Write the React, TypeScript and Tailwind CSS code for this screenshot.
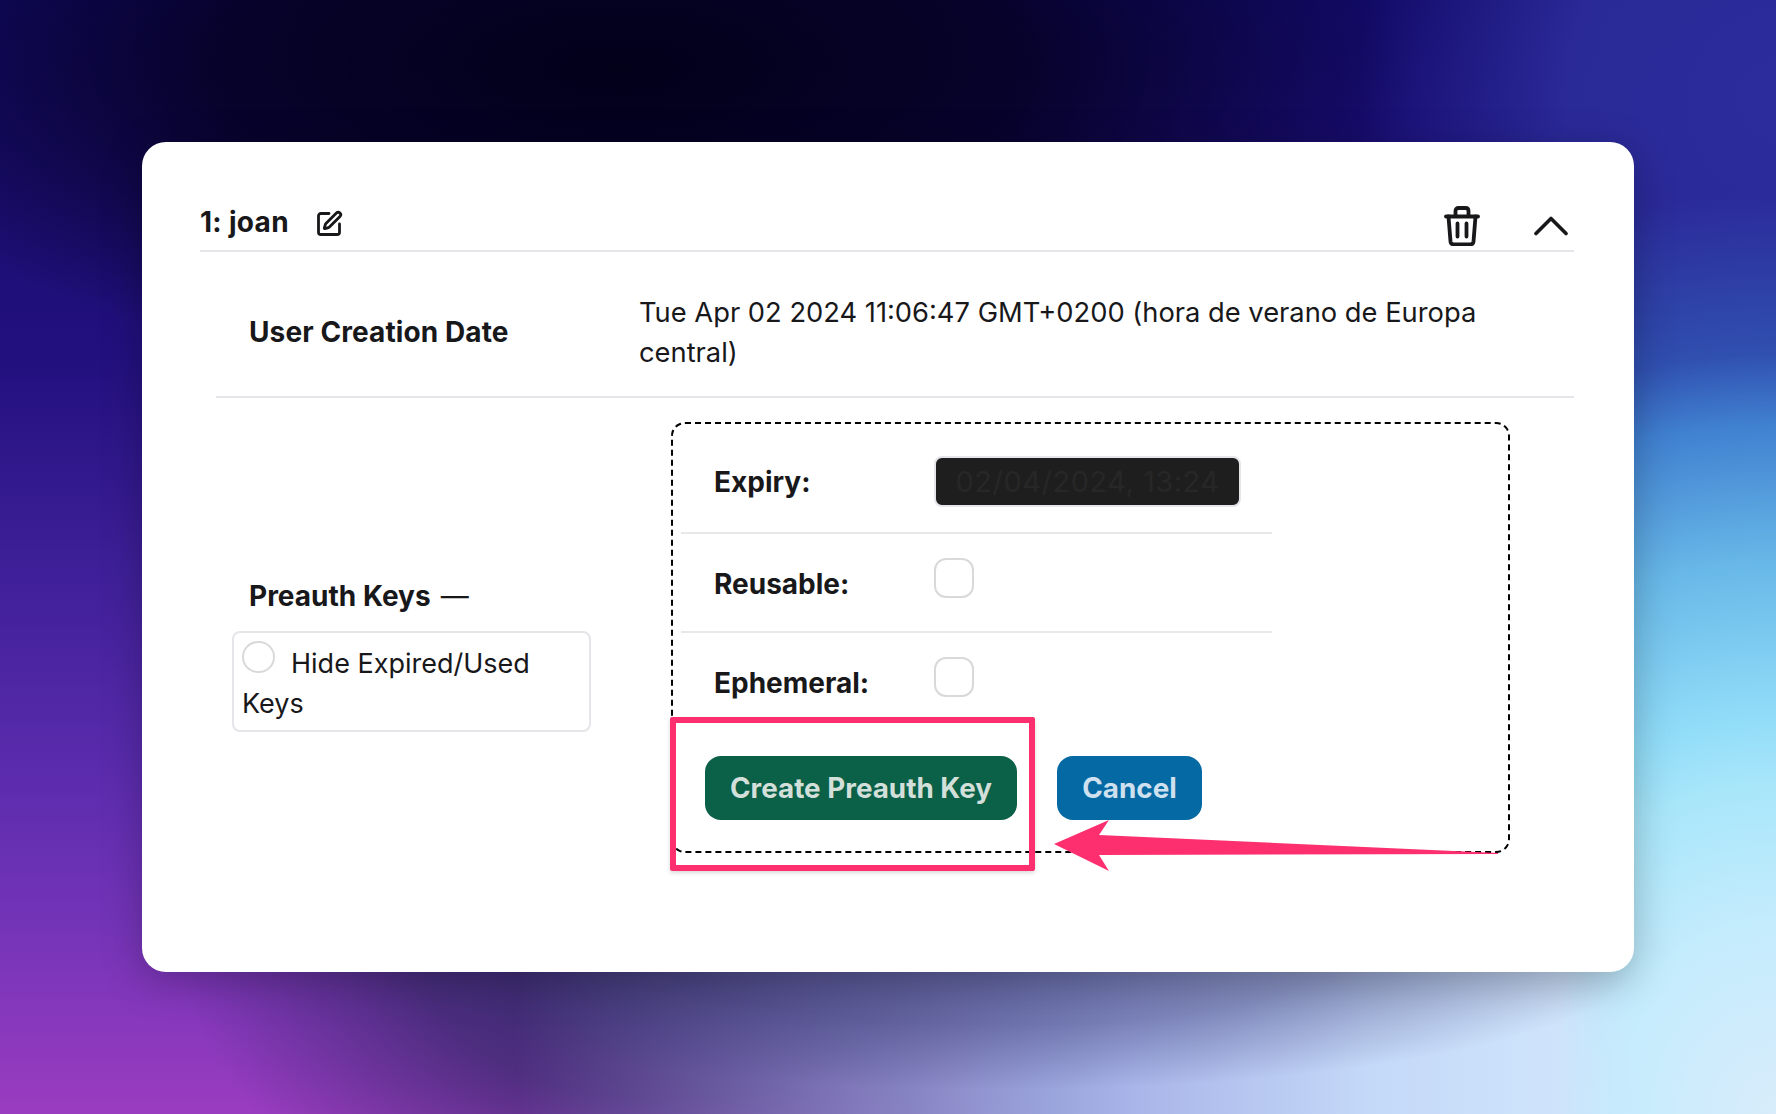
import { SquarePen } from "lucide-react";

function Trash() {
  return (
    <svg width="36" height="40" viewBox="0 0 36 40" fill="none" stroke="#18181b" strokeWidth="3.8" strokeLinecap="round" strokeLinejoin="round">
      <path d="M2 10.5H34" />
      <path d="M4.5 10.5L6.5 35.5C6.7 37.3 7.8 38.3 9.5 38.3H26.5C28.2 38.3 29.3 37.3 29.5 35.5L31.5 10.5" />
      <path d="M11.5 10V5C11.5 3 12.5 2 14.5 2H21.5C23.5 2 24.5 3 24.5 5V10" />
      <path d="M13.5 17.5V30.5M22.5 17.5V30.5" />
    </svg>
  );
}

function Chevron() {
  return (
    <svg width="34" height="20" viewBox="0 0 34 20" fill="none" stroke="#18181b" strokeWidth="3.6" strokeLinecap="round" strokeLinejoin="round">
      <path d="M2 17.5L17 2.5L32 17.5" />
    </svg>
  );
}

function Check() {
  return <div className="h-[40px] w-[40px] rounded-[12px] border-2 border-[#d9d9d9] bg-white" />;
}

export default function App() {
  return (
    <div className="flex h-[1114px] w-full items-start justify-center overflow-hidden [background:radial-gradient(ellipse_640px_130px_at_1000px_960px,rgba(50,50,110,0.55)_0%,rgba(50,50,110,0.4)_50%,rgba(50,50,110,0)_100%),linear-gradient(90deg,rgba(138,144,200,0)_0%,rgba(138,144,200,0)_25%,rgba(138,144,200,0.85)_51%,#a8b4e8_66%,#c4d8f8_82%,#cfe4fb_95%,rgba(207,228,251,0)_100%)_142px_972px/1492px_142px_no-repeat,radial-gradient(ellipse_900px_1000px_at_1776px_1114px,#d8ecfb_0%,#c4ecfd_19%,#a8e6fa_33%,#90dcf8_40%,#68b8e8_55%,#4080d0_69%,#3050b0_76%,rgba(42,42,156,0)_92%),radial-gradient(ellipse_420px_450px_at_1776px_100px,#2c2c9c_0%,rgba(44,44,156,0.9)_50%,rgba(44,44,156,0)_100%),radial-gradient(ellipse_800px_320px_at_620px_70px,#03001a_0%,rgba(3,0,26,0.8)_50%,rgba(3,0,26,0)_100%),radial-gradient(ellipse_480px_300px_at_660px_950px,rgba(50,40,100,0.95)_0%,rgba(50,40,100,0.7)_50%,rgba(50,40,100,0)_100%),linear-gradient(180deg,#120a68_0%,#22107e_32%,#3e1f98_51%,#5c2cae_70%,#7434b8_83%,#9a3cc0_100%)] pt-[142px] font-['Inter',sans-serif] text-[#18181b]">
      <div className="relative h-[830px] w-[1492px] rounded-[24px] bg-white pt-[58px] pr-[60px] pl-[58px] shadow-[0_10px_40px_rgba(0,0,0,0.25)]">
        <div className="flex h-[52px] items-start justify-between border-b-2 border-[#e5e5ea]">
          <div className="flex items-center gap-[26px]">
            <span className="text-[28px] leading-[44px] font-bold tracking-[0.3px]">1: joan</span>
            <SquarePen size={28} strokeWidth={2.4} className="mt-[4px]" />
          </div>
          <div className="flex items-start gap-[54px] pr-[6px]">
            <div className="pt-[6px]"><Trash /></div>
            <div className="pt-[16px]"><Chevron /></div>
          </div>
        </div>

        <div className="ml-[16px] flex h-[146px] border-b-2 border-[#e5e5ea] pt-[41px] text-[27.3px] leading-[40px]">
          <div className="w-[423px] pt-[19px] pl-[33px] text-[28px] font-bold tracking-[0.1px]">User Creation Date</div>
          <div className="flex-1 pr-[80px]">Tue Apr 02 2024 11:06:47 GMT+0200 (hora de verano de Europa central)</div>
        </div>

        <div className="ml-[16px] flex items-start text-[27.3px] leading-[40px]">
          <div className="w-[455px] pt-[178px]">
            <div className="flex items-center pl-[33px] text-[28px] font-bold">
              Preauth Keys <span className="ml-[10px] font-normal">—</span>
            </div>
            <div className="mt-[15px] ml-[16px] h-[101px] w-[359px] rounded-[8px] border-2 border-[#e5e5ea] pt-[8px] pl-[8px] text-[27px]">
              <span className="mr-[16px] inline-block h-[32px] w-[33px] rounded-full border-2 border-[#d9d9d9] align-top" />
              <span className="relative top-[3px]">Hide Expired/Used</span>
              <span className="relative top-[3px]"> Keys</span>
            </div>
          </div>

          <div className="mt-[24px] h-[431px] w-[839px] rounded-[14px] border-2 border-dashed border-black">
            <div className="ml-[8px] w-[591px]">
              <div className="flex h-[110px] items-start border-b-2 border-[#e8e8ea] pt-[32px] pl-[33px]">
                <div className="w-[220px] pt-[6px] text-[28px] font-bold">Expiry:</div>
                <div className="flex h-[51px] w-[307px] items-center justify-center rounded-[8px] border-2 border-[#e5e5ea] bg-[#1e1e1e] text-[29px] tracking-[0.5px] text-[#272727]">
                  02/04/2024, 13:24
                </div>
              </div>
              <div className="flex h-[99px] items-start border-b-2 border-[#e8e8ea] pt-[24px] pl-[33px]">
                <div className="w-[220px] pt-[6px] text-[28px] font-bold">Reusable:</div>
                <Check />
              </div>
              <div className="flex h-[88px] items-start pt-[24px] pl-[33px]">
                <div className="w-[220px] pt-[6px] text-[28px] font-bold">Ephemeral:</div>
                <Check />
              </div>
            </div>
            <div className="mt-[35px] ml-[32px] flex gap-[40px]">
              <button className="h-[64px] w-[312px] rounded-[16px] bg-[#0b6048] text-[27.8px] font-bold text-[#d3dfd9]">Create Preauth Key</button>
              <button className="h-[64px] w-[145px] rounded-[16px] bg-[#0569a3] text-[27.8px] font-bold text-[#cfe0ef]">Cancel</button>
            </div>
          </div>
        </div>

        <div className="absolute top-[575px] left-[528px] h-[154px] w-[365px] rounded-[2px] border-[6px] border-[#fe2f6e] shadow-[0_2px_4px_rgba(0,0,0,0.15)]" />
        <svg className="absolute top-[670px] left-[905px]" width="460" height="70" viewBox="0 0 460 70">
          <path d="M7 32L62 8L52 23L451 41L451 42L52 43L62 59Z" fill="#fe2f6e" />
        </svg>
      </div>
    </div>
  );
}
